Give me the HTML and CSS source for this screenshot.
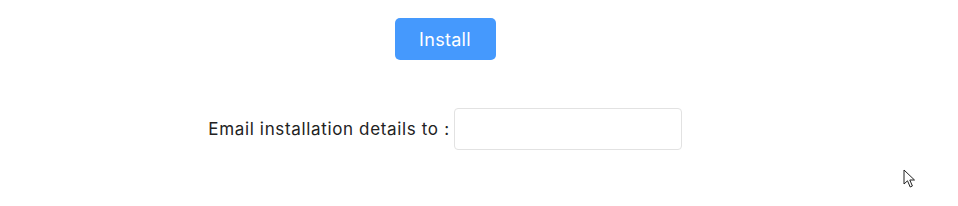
FILE: index.html
```html
<!DOCTYPE html>
<html lang="en">
  <head>
    <meta charset="UTF-8" />
    <meta name="viewport" content="width=device-width, initial-scale=1.0" />
    <title>Install</title>
    <link rel="stylesheet" href="styles.css">
  </head>
  <body>
    <div class="container">
      <div class="install-row">
        <button type="button" class="install-btn">Install</button>
      </div>

      <div class="email-row">
        <label for="email">Email installation details to :</label>
        <input type="email" id="email" name="email" />
      </div>
    </div>

    <svg class="cursor" width="14" height="20" viewBox="0 0 14 20">
      <path d="M1 1 L1 15 L4.5 11.8 L7.2 18 L9.4 17 L6.8 11 L11.5 11 Z" fill="#fff" stroke="#222" stroke-width="1" stroke-linejoin="miter" />
    </svg>
  </body>
</html>
```

FILE: styles.css
```css
body {
  font-family: Inter, "Noto Sans", sans-serif;
  background-color: #fff;
  margin: 0;
  padding: 0;
  color: #222;
}

.container {
  width: 890px;
  padding-top: 18px;
}

.install-row {
  display: flex;
  justify-content: center;
}

.install-btn {
  background-color: #4599fd;
  color: #fff;
  border: none;
  border-radius: 5px;
  width: 101px;
  height: 42px;
  font-family: inherit;
  font-size: 18px;
  letter-spacing: 0.3px;
  cursor: pointer;
}

.email-row {
  display: flex;
  justify-content: center;
  align-items: center;
  gap: 4px;
  margin-top: 48px;
}

.email-row label {
  font-size: 17px;
  letter-spacing: 0.65px;
  color: #222;
}

.email-row input {
  width: 228px;
  height: 42px;
  border: 1px solid #e2e2e2;
  border-radius: 4px;
  box-sizing: border-box;
  padding: 0 10px;
  font-size: 16px;
}

.cursor {
  position: absolute;
  left: 903px;
  top: 169px;
}
```
